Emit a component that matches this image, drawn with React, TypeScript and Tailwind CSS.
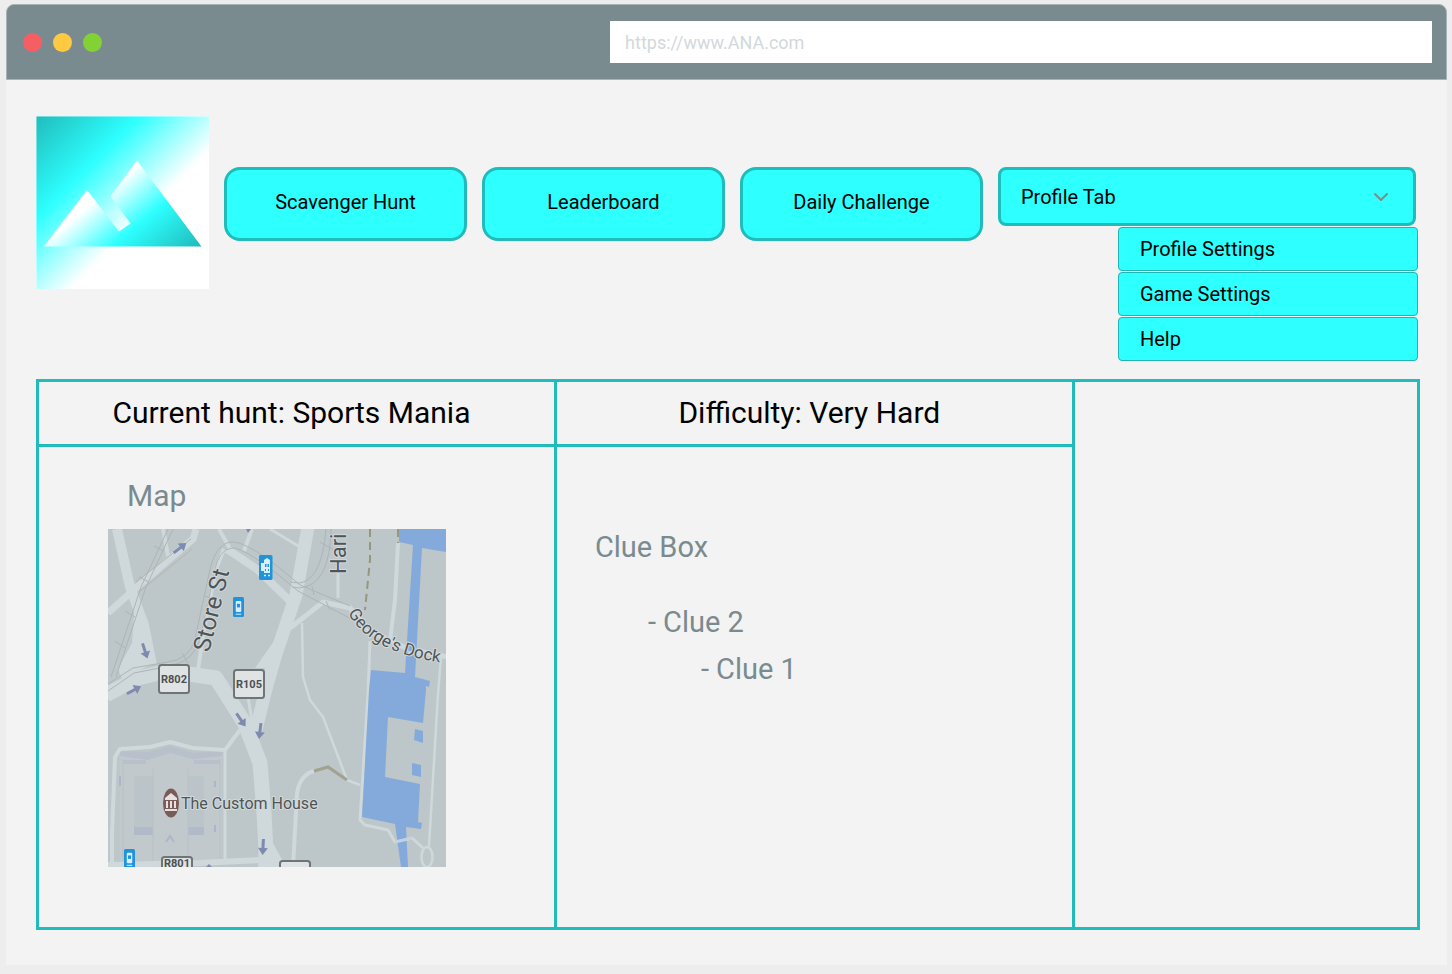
import { useState } from "react";
import { ChevronDown } from "lucide-react";

const tabs = ["Scavenger Hunt", "Leaderboard", "Daily Challenge"];
const profileLinks = ["Profile Settings", "Game Settings", "Help"];

function Logo() {
  return (
    <svg viewBox="0 0 173 173" className="size-[173px] shrink-0" role="img" aria-label="ANA">
      <defs>
        <linearGradient id="sky" x1="0" y1="0" x2="1" y2="1">
          <stop offset="0" stopColor="#20bcbc" />
          <stop offset="0.3" stopColor="#2effff" />
          <stop offset="0.6" stopColor="#ffffff" />
        </linearGradient>
        <linearGradient id="peak" gradientUnits="userSpaceOnUse" x1="66" y1="79" x2="131" y2="157">
          <stop offset="0" stopColor="#ffffff" />
          <stop offset="0.45" stopColor="#2effff" />
          <stop offset="1" stopColor="#20bcbc" />
        </linearGradient>
      </defs>
      <rect width="173" height="173" fill="url(#sky)" />
      <path d="M0 .5H173M.5 0V173" stroke="#fff" strokeOpacity=".4" />
      <path
        d="M8 130.500 51 74 83 115.500 94.500 107.500 74.500 80.500 101 44.500 165.500 130.500Z"
        fill="url(#peak)"
      />
    </svg>
  );
}

function Arrow({ x, y, angle }: { x: number; y: number; angle: number }) {
  return (
    <path
      d="M-8-1.500H1V-5L8 0 1 5V1.500H-8Z"
      fill="#7f8ab0"
      transform={`translate(${x} ${y}) rotate(${angle})`}
    />
  );
}

function RoadSign({ x, y, label, baseline = 18 }: { x: number; y: number; label?: string; baseline?: number }) {
  return (
    <g>
      <rect x={x} y={y} width="30" height="28" rx="2.500" fill="#dfe3e3" stroke="#6f7476" strokeWidth="2" />
      {label && (
        <text x={x + 15} y={y + baseline} textAnchor="middle" fontSize="11" fontWeight="700" fill="#4b5052">
          {label}
        </text>
      )}
    </g>
  );
}

function StationIcon({ x, y, w, h }: { x: number; y: number; w: number; h: number }) {
  return (
    <g transform={`translate(${x} ${y})`}>
      <rect width={w} height={h} rx="1.500" fill="#1f93dc" />
      <rect x={w * 0.25} y={h * 0.2} width={w * 0.5} height={h * 0.55} rx="1" fill="#dceefa" />
      <rect x={w * 0.36} y={h * 0.34} width={w * 0.28} height={h * 0.18} fill="#1f93dc" />
      <path d={`M${w * 0.25} ${h * 0.86}H${w * 0.75}`} stroke="#dceefa" />
    </g>
  );
}

function InterchangeIcon({ x, y }: { x: number; y: number }) {
  return (
    <g transform={`translate(${x} ${y})`}>
      <rect width="13.500" height="25" rx="1.500" fill="#1f93dc" />
      <path d="M5 5 8 3 11 5V18H5V16H2V8H5Z" fill="#dceefa" />
      <path d="M6 9H7.500V12H6ZM8.500 9H10V12H8.500ZM6 14H7V16H6ZM9 14H10V16H9Z" fill="#1f93dc" />
      <path d="M5 20.500H7M9 20.500H11" stroke="#dceefa" strokeWidth="1.500" />
    </g>
  );
}

function StreetMap() {
  return (
    <svg
      viewBox="0 0 338 338"
      className="size-[338px] font-[Roboto,sans-serif]"
      role="img"
      aria-label="Map around The Custom House"
    >
      <rect width="338" height="338" fill="#bdc6c8" />
      <g fill="#c2c9cd">
        <path d="M12 222 40 226 62 217 85 226 114 222V332H12Z" />
        <path d="M12 222 40 223 62 217 85 224 114 222V227L85 230 62 224 40 231 12 227Z" fill="#b7c0cb" />
        <path d="M26 247H45V306H26ZM80 247H96V306H80Z" fill="#bbc4c8" />
        <path d="M26 298H45V306H26ZM80 298H96V306H80Z" fill="#b1bac8" />
        <path d="M15 231H38V235H15ZM86 231H112V235H86Z" fill="#b7c0cb" />
        <path d="M45 240V332M80 240V332M15 230V332M112 230V330" stroke="#b8c1c8" />
        <path d="M58 313 62 307 66 313M12 247V257M107 252V258M107 296V303" stroke="#adb5cc" strokeWidth="2" fill="none" />
      </g>
      <g fill="none" stroke="#cfd8db" strokeLinejoin="round">
        <path d="M9 0 22 58 36 96 44 136" strokeWidth="10" />
        <path d="M27 70 46 134 14 150 10 140 24 114Z" fill="#cfd8db" stroke="none" />
        <path d="M0 84 29 58 85 10 88 0" strokeWidth="7" />
        <path d="M55 0 60 27M144 0 136 22M111 0 121 18" strokeWidth="4" />
        <path d="M119 20 150 41 184 74" strokeWidth="8" />
        <path d="M200-2 188 66 168 125 158 160 147 205" strokeWidth="13" />
        <path d="M166 112 147 139H166Z" fill="#cfd8db" stroke="none" />
        <path d="M-2 166 30 149 60 142 108 149 137 195 152 234 156 284 159 340" strokeWidth="15" />
        <path d="M153 270 150 338H178L165 314 160 270Z" fill="#cfd8db" stroke="none" />
        <path d="M90 141 96 100 108 40 116 20" strokeWidth="4" />
        <path d="M140 168 144 192M153 190H143" strokeWidth="3" />
        <path d="M132 201 117 221 85 219 62 213 42 218 12 220 7 228 4 304V338" strokeWidth="4" />
        <path d="M117 221V331" strokeWidth="3" />
        <path d="M0 336 90 334 152 331" strokeWidth="6" />
        <path d="M162 0 192 18M230 44V69" strokeWidth="3" />
        <path d="M182 99 200 85 215 73 242 79 262 102 300 120 340 128" strokeWidth="5" />
        <path d="M194 94 195 148 202 171 215 188 239 251 252 256" strokeWidth="2.500" />
        <path d="M290 14 287 71 282 112" strokeWidth="4" />
        <path d="M262 112 260 165 252 291 257 296 280 301 287 313 304 309 315 319" strokeWidth="3" />
        <path d="M333 128 330 165 321 317" strokeWidth="2.500" />
        <path d="M206 242Q192 246 189 264L185 338" strokeWidth="4" />
        <ellipse cx="319" cy="328" rx="5.500" ry="10" strokeWidth="2.500" />
      </g>
      <path
        d="M291 0H338V23L314 19 307 148 322 152 321 158 318 157V161L315 194 280 188 277 248 312 255 310 293 314 294 313 300 298 298 300 338H293L287 295 254 288 261 161 263 141 297 144 305 16 291 13Z"
        fill="#84aadb"
      />
      <path d="M307 200 315 202V214L306 211ZM304 234 313 236V248L304 246Z" fill="#84aadb" />
      <path d="M287 313 304 309M300 123 314 126" stroke="#c3d2df" strokeWidth="3" />
      <g fill="none" stroke="#adb5b6">
        <path d="M60 0 33 58 3 148M65 0 38 58 8 148" />
        <path d="M0 155 25 139 60 133Q82 130 87 110L101 45Q107 14 124 13T192 56L242 77" />
        <path d="M0 162 26 144 62 137Q86 132 92 110L106 45Q110 20 124 19T190 62L232 84 270 104" />
        <path d="M218 0Q214 50 192 54L182 53M223 0Q222 56 192 59L184 58" />
        <path d="M46 17 56 22M31 48 41 53M17 82 27 88M7 112 17 119M212 13 226 21M204 57 206 66M218 72 222 81M96 67 104 69M74 124 80 134" />
      </g>
      <path d="M28 53 83 10M31 63 84 20" stroke="#b5b5ab" />
      <path d="M262 0V31L257 81M290 0V14" fill="none" stroke="#96977b" strokeWidth="2" strokeDasharray="8 5" />
      <path d="M206 242 220 238 239 251" fill="none" stroke="#a1a28f" strokeWidth="3" />
      <Arrow x={133} y={191} angle={55} />
      <Arrow x={152} y={202} angle={97} />
      <Arrow x={155} y={318} angle={93} />
      <Arrow x={26} y={161} angle={-28} />
      <Arrow x={72} y={19} angle={-38} />
      <Arrow x={37} y={122} angle={72} />
      <path d="M138 0H143L140 4ZM98 338 101 335 104 338Z" fill="#7f8ab0" />
      <InterchangeIcon x={151} y={26} />
      <StationIcon x={125} y={68} w={11} h={20} />
      <StationIcon x={16} y={320} w={11} h={19} />
      <RoadSign x={51} y={136} label="R802" />
      <RoadSign x={126} y={141} label="R105" />
      <RoadSign x={54} y={328} label="R801" baseline={10} />
      <RoadSign x={172} y={332} />
      <ellipse cx="63" cy="274" rx="8" ry="14.500" fill="#795c58" />
      <path d="M57 269 63 264 69 269V271H57ZM58 272H60V279H58ZM62 272H64V279H62ZM66 272H68V279H66ZM57 280H69V282H57Z" fill="#e6e2e1" />
      <g fill="#4f5457" stroke="#d3dadc" strokeWidth="2" paintOrder="stroke" strokeLinejoin="round">
        <text x="73" y="280" fontSize="16">The Custom House</text>
        <text fontSize="24" transform="translate(101 124) rotate(-76)">Store St</text>
        <text fontSize="22" transform="translate(238 45) rotate(-90)">Hari</text>
        <path id="dock-street" d="M240 84Q262 124 336 134" fill="none" stroke="none" />
        <text fontSize="17">
          <textPath href="#dock-street">George's Dock</textPath>
        </text>
      </g>
    </svg>
  );
}

export default function App() {
  const [open, setOpen] = useState(true);
  const [tab, setTab] = useState(tabs[0]);

  return (
    <div className="flex min-h-screen flex-col bg-[#ededed] pt-1 pr-[5px] pb-[9px] pl-1.5 font-[Roboto,sans-serif] text-black">
      <div className="flex flex-1 flex-col rounded-t-lg bg-[#f3f3f3]">
        <header className="flex h-[76px] items-center rounded-t-lg border border-[#a7b3b7] bg-[#7a8b90] pr-3.5 pl-4">
          <div className="flex flex-[5] gap-[11px]">
            <span className="size-[19px] rounded-full bg-[#f55f64]" />
            <span className="size-[19px] rounded-full bg-[#ffca42]" />
            <span className="size-[19px] rounded-full bg-[#82d236]" />
          </div>
          <div className="flex flex-[7]">
            <input
              type="url"
              aria-label="Address"
              placeholder="https://www.ANA.com"
              className="h-[42px] w-full bg-white px-[15px] text-lg outline-none placeholder:text-[#d2d8db]"
            />
          </div>
        </header>

        <main className="flex flex-1 flex-col gap-[18px] pt-9 pr-[27px] pb-[35px] pl-[30px]">
          <div className="flex min-h-[245px] items-start gap-[15px]">
            <Logo />
            <nav className="grid flex-1 grid-cols-[243fr_243fr_243fr_422fr] items-start gap-[15px] pt-[51px]">
              {tabs.map((name) => (
                <button
                  key={name}
                  type="button"
                  aria-pressed={tab === name}
                  onClick={() => setTab(name)}
                  className="h-[74px] rounded-2xl border-3 border-[#20bcbc] bg-[#2effff] pb-1 text-xl"
                >
                  {name}
                </button>
              ))}
              <div className="flex flex-col pr-0.5">
                <button
                  type="button"
                  aria-expanded={open}
                  aria-controls="profile-menu"
                  onClick={() => setOpen(!open)}
                  className="mr-0.5 flex h-[59px] items-center justify-between rounded-lg border-3 border-[#20bcbc] bg-[#2effff] px-5 text-xl"
                >
                  Profile Tab
                  <ChevronDown className="size-6 text-[#82898c]" strokeWidth={2} aria-hidden />
                </button>
                {open && (
                  <ul id="profile-menu" className="flex w-[300px] flex-col gap-px self-end pt-px">
                    {profileLinks.map((name) => (
                      <li key={name}>
                        <a
                          href="#"
                          className="flex h-11 items-center rounded-sm border border-[#20b4b4] bg-[#2effff] px-[21px] text-xl"
                        >
                          {name}
                        </a>
                      </li>
                    ))}
                  </ul>
                )}
              </div>
            </nav>
          </div>

          <div className="grid flex-1 grid-cols-[3fr_3fr_2fr] border-y-3 border-l-3 border-[#20bcbc]">
            <section className="flex flex-col border-r-3 border-[#20bcbc]">
              <h2 className="border-b-3 border-[#20bcbc] py-[11px] pr-2.5 text-center text-3xl leading-10">
                Current hunt: Sports Mania
              </h2>
              <div className="pt-[29px] pl-[69px] text-[#7a8b90]">
                <h3 className="pl-[19px] text-3xl leading-10">Map</h3>
                <div className="pt-[13px]">
                  <StreetMap />
                </div>
              </div>
            </section>
            <section className="flex flex-col border-r-3 border-[#20bcbc]">
              <h2 className="border-b-3 border-[#20bcbc] py-[11px] pr-2.5 text-center text-3xl leading-10">
                Difficulty: Very Hard
              </h2>
              <div className="pt-[77px] pl-[38px] text-[29px] leading-[47px] text-[#7a8b90]">
                <h3>Clue Box</h3>
                <ul className="pt-7">
                  <li className="pl-[53px]">- Clue 2</li>
                  <li className="pl-[106px]">- Clue 1</li>
                </ul>
              </div>
            </section>
            <section aria-label="Details" className="border-r-3 border-[#20bcbc]" />
          </div>
        </main>
      </div>
    </div>
  );
}
